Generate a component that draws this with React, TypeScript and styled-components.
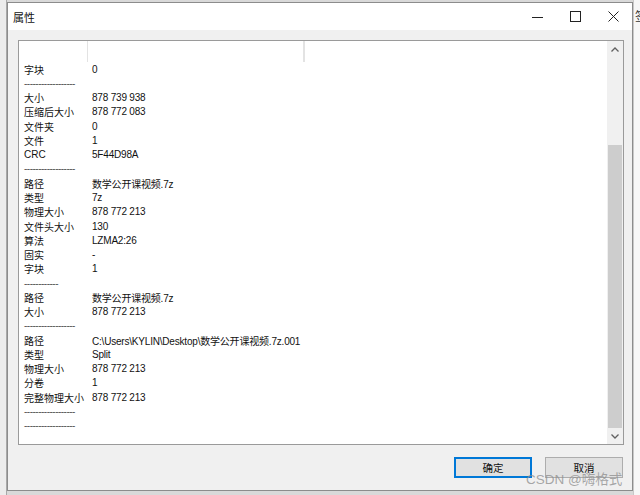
import React from 'react'
import styled, { createGlobalStyle } from 'styled-components'

const GlobalStyle = createGlobalStyle`
  html, body { margin: 0; padding: 0; }
  body { font-family: "Liberation Sans", "Noto Sans CJK SC", sans-serif; }
`

type Row = { label?: string; value?: string; dash?: number }

const rows: Row[] = [
  { label: '字块', value: '0' },
  { dash: 18 },
  { label: '大小', value: '878 739 938' },
  { label: '压缩后大小', value: '878 772 083' },
  { label: '文件夹', value: '0' },
  { label: '文件', value: '1' },
  { label: 'CRC', value: '5F44D98A' },
  { dash: 18 },
  { label: '路径', value: '数学公开课视频.7z' },
  { label: '类型', value: '7z' },
  { label: '物理大小', value: '878 772 213' },
  { label: '文件头大小', value: '130' },
  { label: '算法', value: 'LZMA2:26' },
  { label: '固实', value: '-' },
  { label: '字块', value: '1' },
  { dash: 12 },
  { label: '路径', value: '数学公开课视频.7z' },
  { label: '大小', value: '878 772 213' },
  { dash: 18 },
  { label: '路径', value: 'C:\\Users\\KYLIN\\Desktop\\数学公开课视频.7z.001' },
  { label: '类型', value: 'Split' },
  { label: '物理大小', value: '878 772 213' },
  { label: '分卷', value: '1' },
  { label: '完整物理大小', value: '878 772 213' },
  { dash: 18 },
  { dash: 18 },
]

const App = () => {
  return (
    <Page>
      <GlobalStyle />
      <LeftStrip />
      <Dialog>
        <TitleBar>
          <Title>属性</Title>
          <Controls>
            <CtrlButton>
              <svg width="11" height="11" viewBox="0 0 11 11">
                <line x1="0" y1="6.5" x2="11" y2="6.5" stroke="#222" strokeWidth="1" />
              </svg>
            </CtrlButton>
            <CtrlButton>
              <svg width="11" height="11" viewBox="0 0 11 11">
                <rect x="0.5" y="0.5" width="10" height="10" fill="none" stroke="#222" strokeWidth="1" />
              </svg>
            </CtrlButton>
            <CtrlButton>
              <svg width="11" height="11" viewBox="0 0 11 11">
                <path d="M0.5 0.5 L10.5 10.5 M10.5 0.5 L0.5 10.5" stroke="#222" strokeWidth="1" />
              </svg>
            </CtrlButton>
          </Controls>
        </TitleBar>
        <Body>
          <ListView>
            <ListContent>
              <Header>
                <HeadCell $width={68} />
                <HeadCell $width={215} />
                <HeadCell $width={0} />
              </Header>
              {rows.map((r, i) =>
                r.dash ? (
                  <ListRow key={i}>
                    <Dash>{'-'.repeat(r.dash)}</Dash>
                  </ListRow>
                ) : (
                  <ListRow key={i}>
                    <Label>{r.label}</Label>
                    <Value>{r.value}</Value>
                  </ListRow>
                )
              )}
            </ListContent>
            <ScrollBar>
              <ArrowBox>
                <svg width="8" height="5" viewBox="0 0 8 5">
                  <polyline points="0.5,4.5 4,1 7.5,4.5" fill="none" stroke="#606060" strokeWidth="1.3" />
                </svg>
              </ArrowBox>
              <Track>
                <Thumb />
              </Track>
              <ArrowBox>
                <svg width="8" height="5" viewBox="0 0 8 5">
                  <polyline points="0.5,0.5 4,4 7.5,0.5" fill="none" stroke="#606060" strokeWidth="1.3" />
                </svg>
              </ArrowBox>
            </ScrollBar>
          </ListView>
          <Footer>
            <Button $focused>确定</Button>
            <Button>取消</Button>
          </Footer>
        </Body>
      </Dialog>
      <RightStrip>
        <Peek>签</Peek>
      </RightStrip>
      <Watermark>CSDN @嗨格式</Watermark>
    </Page>
  )
}

export default App

const Page = styled.div`
position: relative;
width: 640px;
height: 495px;
overflow: hidden;
display: flex;
background: #d9d9d9;
`
const LeftStrip = styled.div`
width: 6px;
height: 100%;
background: #ececec;
border-right: 1px solid #a8a8a8;
`
const RightStrip = styled.div`
flex: 1;
background: #f7f7f7;
border-left: 1px solid #c8c8c8;
overflow: hidden;
`
const Peek = styled.div`
margin: 7px 0 0 1px;
font-size: 12px;
color: #333;
font-family: "Noto Sans CJK SC", sans-serif;
`
const Dialog = styled.div`
width: 624px;
height: 487px;
margin-top: 2px;
border: 1px solid #8c8c8c;
display: flex;
flex-direction: column;
background: #f0f0f0;
`
const TitleBar = styled.div`
height: 27px;
display: flex;
align-items: center;
justify-content: space-between;
background: #fff;
`
const Title = styled.div`
padding-left: 5px;
font-size: 11px;
color: #111;
font-family: "Noto Sans CJK SC", sans-serif;
`
const Controls = styled.div`
display: flex;
height: 100%;
`
const CtrlButton = styled.div`
width: 38px;
height: 100%;
display: flex;
align-items: center;
justify-content: center;
`
const Body = styled.div`
flex: 1;
display: flex;
flex-direction: column;
padding: 10px 8px 0 10px;
`
const ListView = styled.div`
height: 403px;
border: 1px solid #9a9a9a;
background: #fff;
display: flex;
`
const ListContent = styled.div`
flex: 1;
display: flex;
flex-direction: column;
`
const Header = styled.div`
height: 21px;
display: flex;
`
const HeadCell = styled.div<{ $width: number }>`
width: ${p => p.$width}px;
border-right: 1px solid #e3e3e3;
`
const ListRow = styled.div`
height: 14.28px;
display: flex;
align-items: center;
font-size: 10px;
color: #111;
white-space: nowrap;
`
const Label = styled.div`
width: 68px;
padding-left: 5px;
box-sizing: border-box;
`
const Value = styled.div`
padding-left: 5px;
letter-spacing: -0.2px;
`
const Dash = styled.div`
padding-left: 5px;
color: #555;
letter-spacing: -0.5px;
`
const ScrollBar = styled.div`
width: 16px;
display: flex;
flex-direction: column;
background: #f0f0f0;
`
const ArrowBox = styled.div`
height: 16px;
display: flex;
align-items: center;
justify-content: center;
`
const Track = styled.div`
flex: 1;
display: flex;
flex-direction: column;
justify-content: flex-end;
`
const Thumb = styled.div`
height: 283px;
margin: 0 1px;
background: #cdcdcd;
`
const Footer = styled.div`
display: flex;
justify-content: flex-end;
gap: 13px;
padding: 12px 1px 0 0;
`
const Button = styled.div<{ $focused?: boolean }>`
width: 78px;
height: 21px;
box-sizing: border-box;
display: flex;
align-items: center;
justify-content: center;
font-size: 10.5px;
color: #111;
font-family: "Noto Sans CJK SC", sans-serif;
background: #e1e1e1;
border: ${p => (p.$focused ? '2px solid #0078d7' : '1px solid #adadad')};
`
const Watermark = styled.div`
position: absolute;
left: 526px;
top: 468px;
font-size: 13.5px;
color: rgba(140, 140, 140, 0.75);
font-family: "Liberation Sans", "Noto Sans CJK SC", sans-serif;
white-space: nowrap;
`
